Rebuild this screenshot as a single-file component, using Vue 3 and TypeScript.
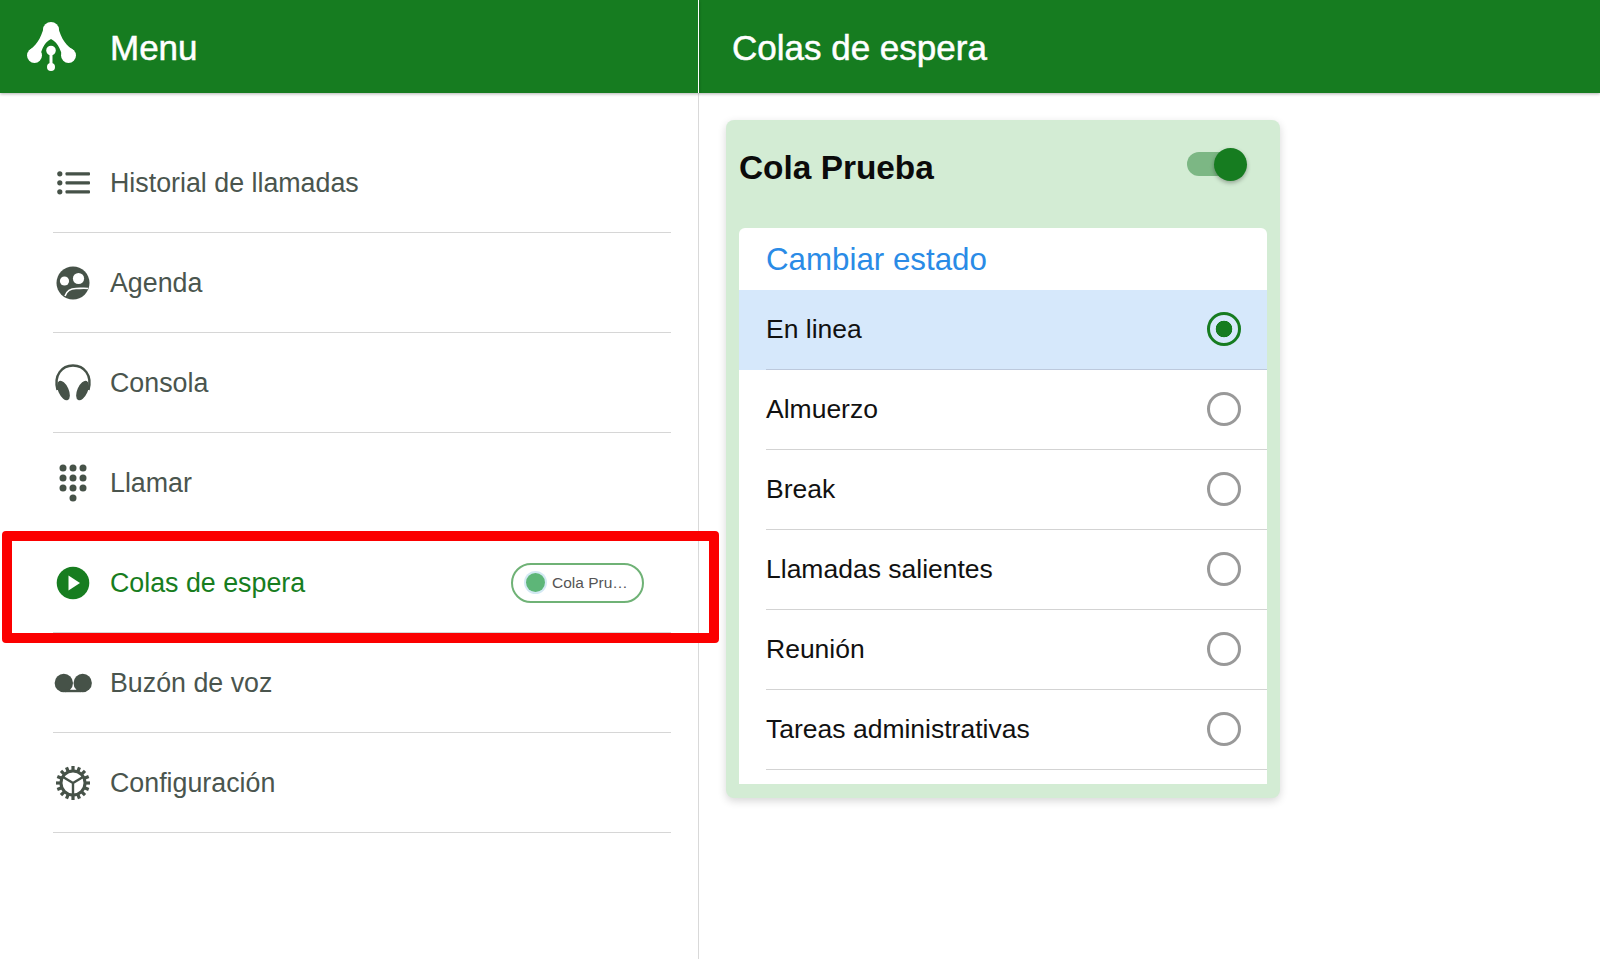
<script setup lang="ts">
interface NavItem {
  id: string
  label: string
  active?: boolean
}

const navItems: NavItem[] = [
  { id: 'list', label: 'Historial de llamadas' },
  { id: 'agenda', label: 'Agenda' },
  { id: 'console', label: 'Consola' },
  { id: 'dial', label: 'Llamar' },
  { id: 'queue', label: 'Colas de espera', active: true },
  { id: 'voicemail', label: 'Buzón de voz' },
  { id: 'settings', label: 'Configuración' },
]

const statuses: string[] = [
  'En linea',
  'Almuerzo',
  'Break',
  'Llamadas salientes',
  'Reunión',
  'Tareas administrativas',
]

const gearTeeth: number[] = Array.from({ length: 16 }, (_, i) => i * 22.5)
const dialDots: number[][] = [
  [10, 5], [20, 5], [30, 5],
  [10, 15], [20, 15], [30, 15],
  [10, 25], [20, 25], [30, 25],
  [20, 35],
]
</script>

<template>
  <div class="page">
    <aside class="sidebar">
      <header class="bar bar-left">
        <svg class="logo" viewBox="0 0 60 60" aria-hidden="true">
          <path d="M23 10 C20 24 14 30 8 34.5 L18 44 C20 36 22 27 30 23 C38 27 40 36 43 44 L53 34.5 C46 30 40 24 37 10 Z" fill="#fff" />
          <circle cx="30" cy="14" r="8" fill="#fff" />
          <circle cx="13.5" cy="39.5" r="7.5" fill="#fff" />
          <circle cx="47.5" cy="39.5" r="7.5" fill="#fff" />
          <path d="M30 34 V51" stroke="#fff" stroke-width="3" />
          <circle cx="30" cy="34.5" r="4.8" fill="#fff" />
          <circle cx="30" cy="51" r="4" fill="#fff" />
        </svg>
        <h1 class="bar-title">Menu</h1>
      </header>

      <nav class="nav">
        <div
          v-for="item in navItems"
          :key="item.id"
          class="nav-row"
          :class="{ active: item.active }"
        >
          <span class="nav-icon">
            <svg v-if="item.id === 'list'" viewBox="0 0 40 40" aria-hidden="true">
              <g fill="#465248">
                <circle cx="6.8" cy="10.8" r="2.6" />
                <circle cx="6.8" cy="19.8" r="2.6" />
                <circle cx="6.8" cy="28.8" r="2.6" />
                <rect x="12.5" y="9.2" width="24.5" height="3.3" rx="1" />
                <rect x="12.5" y="18.2" width="24.5" height="3.3" rx="1" />
                <rect x="12.5" y="27.2" width="24.5" height="3.3" rx="1" />
              </g>
            </svg>
            <svg v-else-if="item.id === 'agenda'" viewBox="0 0 40 40" aria-hidden="true">
              <circle cx="20" cy="20" r="16.5" fill="#465248" />
              <circle cx="11.5" cy="18" r="4.6" fill="#fff" />
              <circle cx="25.5" cy="15.5" r="5.6" fill="#fff" />
              <path d="M12 33 C14 27 19 25.5 23 25.5 C27 25.5 31 25 35 25.5" fill="none" stroke="#fff" stroke-width="1.6" />
            </svg>
            <svg v-else-if="item.id === 'console'" viewBox="0 0 40 40" aria-hidden="true">
              <path d="M4.5 27 C0.5 12 9 2.5 20 2.5 C31 2.5 39.5 12 35.5 27" fill="none" stroke="#465248" stroke-width="2.4" />
              <ellipse cx="10.5" cy="27.5" rx="5.2" ry="10.5" transform="rotate(-24 10.5 27.5)" fill="#465248" />
              <ellipse cx="29.5" cy="27.5" rx="5.2" ry="10.5" transform="rotate(24 29.5 27.5)" fill="#465248" />
            </svg>
            <svg v-else-if="item.id === 'dial'" viewBox="0 0 40 40" aria-hidden="true">
              <circle
                v-for="(dot, i) in dialDots"
                :key="i"
                :cx="dot[0]"
                :cy="dot[1]"
                r="3.5"
                fill="#465248"
              />
            </svg>
            <svg v-else-if="item.id === 'queue'" viewBox="0 0 40 40" aria-hidden="true">
              <circle cx="20" cy="20" r="16.3" fill="#177d20" />
              <path d="M15.5 12.5 L27 20 L15.5 27.5 Z" fill="#fff" />
            </svg>
            <svg v-else-if="item.id === 'voicemail'" viewBox="0 0 40 40" aria-hidden="true">
              <circle cx="10.8" cy="20" r="9.2" fill="#465248" />
              <circle cx="29.7" cy="20" r="9.2" fill="#465248" />
              <rect x="12" y="26.8" width="16" height="2.4" fill="#465248" />
            </svg>
            <svg v-else viewBox="0 0 40 40" aria-hidden="true">
              <g fill="#465248">
                <rect
                  v-for="angle in gearTeeth"
                  :key="angle"
                  x="18.4"
                  y="3"
                  width="3.2"
                  height="6"
                  :transform="`rotate(${angle} 20 20)`"
                />
              </g>
              <circle cx="20" cy="20" r="12" fill="none" stroke="#465248" stroke-width="3" />
              <path d="M20 20 L10 14 M20 20 L30 14 M20 20 V32" stroke="#465248" stroke-width="2.4" fill="none" />
            </svg>
          </span>
          <span class="nav-label">{{ item.label }}</span>
          <span v-if="item.active" class="chip">
            <span class="chip-dot"></span>
            <span class="chip-text">Cola Pru…</span>
          </span>
        </div>
      </nav>

      <div class="highlight"></div>
    </aside>

    <main class="main">
      <header class="bar bar-right">
        <h2 class="bar-title">Colas de espera</h2>
      </header>
      <div class="content">
        <section class="card">
          <div class="card-head">
            <h3 class="card-title">Cola Prueba</h3>
            <span class="toggle"><span class="toggle-thumb"></span></span>
          </div>
          <div class="panel">
            <div class="panel-title">Cambiar estado</div>
            <div
              v-for="(status, index) in statuses"
              :key="status"
              class="status-row"
              :class="{ selected: index === 0 }"
            >
              <div class="status-inner">
                <span class="status-label">{{ status }}</span>
                <span class="radio"></span>
              </div>
            </div>
          </div>
        </section>
      </div>
    </main>
  </div>
</template>

<style>
html,
body {
  margin: 0;
  background: #fff;
}
</style>

<style scoped>
.page {
  display: flex;
  height: 959px;
  overflow: hidden;
  background: #fff;
  font-family: "Liberation Sans", Arial, sans-serif;
}
.sidebar {
  position: relative;
  box-sizing: border-box;
  width: 699px;
  flex: none;
  border-right: 1px solid #d9d9d9;
}
.main {
  flex: 1;
  min-width: 0;
}
.bar {
  display: flex;
  align-items: center;
  height: 93px;
  background: #167c20;
  box-shadow: 0 1px 3px rgba(0, 0, 0, 0.3);
  color: #fff;
}
.bar-left {
  margin-right: -1px;
  border-right: 1px solid #fff;
  padding-left: 21px;
}
.bar-right {
  padding-left: 33px;
}
.logo {
  width: 60px;
  height: 60px;
  margin-right: 29px;
  margin-top: -1px;
}
.bar-title {
  margin: 0;
  padding-top: 2px;
  font-size: 35px;
  font-weight: 400;
  -webkit-text-stroke: 0.5px #fff;
}
.nav {
  padding: 40px 27px 0 53px;
}
.nav-row {
  display: flex;
  align-items: center;
  box-sizing: border-box;
  height: 100px;
  border-bottom: 1px solid #d6d6d6;
  color: #4a554e;
  font-size: 26.8px;
}
.nav-row.active {
  color: #177d20;
}
.nav-icon {
  display: block;
  width: 40px;
  height: 40px;
  margin-right: 17px;
}
.nav-icon svg {
  display: block;
  width: 40px;
  height: 40px;
}
.nav-label {
  flex: 1;
  padding-top: 2px;
}
.chip {
  display: flex;
  align-items: center;
  box-sizing: border-box;
  width: 133px;
  height: 40px;
  margin-right: 27px;
  padding-left: 13px;
  border: 2px solid #6fb276;
  border-radius: 20px;
  color: #555;
  font-size: 15.5px;
}
.chip-dot {
  width: 19px;
  height: 19px;
  margin-right: 7px;
  border-radius: 50%;
  background: #5db678;
  box-shadow: 0 0 0 2px #d3e9f3;
}
.highlight {
  position: absolute;
  left: 2px;
  top: 531px;
  width: 717px;
  height: 112px;
  box-sizing: border-box;
  border: 10px solid #fb0000;
  border-radius: 4px;
  z-index: 2;
}
.content {
  padding: 27px;
}
.card {
  box-sizing: border-box;
  width: 554px;
  height: 678px;
  padding: 0 13px;
  border-radius: 8px;
  background: #d3ecd4;
  box-shadow: 0 3px 8px rgba(0, 0, 0, 0.16);
}
.card-head {
  display: flex;
  align-items: center;
  justify-content: space-between;
  height: 108px;
  padding-right: 27px;
  padding-bottom: 12px;
  box-sizing: border-box;
}
.card-title {
  margin: 0;
  color: #0b0b0b;
  font-size: 33.4px;
  font-weight: 700;
}
.toggle {
  position: relative;
  display: block;
  width: 53px;
  height: 24px;
  margin-top: -8px;
  border-radius: 12px;
  background: #7cb784;
}
.toggle-thumb {
  position: absolute;
  right: -7px;
  top: -4.5px;
  width: 33px;
  height: 33px;
  border-radius: 50%;
  background: #167c20;
  box-shadow: 0 2px 4px rgba(0, 0, 0, 0.3);
}
.panel {
  height: 556px;
  overflow: hidden;
  border-radius: 6px 6px 0 0;
  background: #fff;
}
.panel-title {
  display: flex;
  align-items: center;
  height: 62px;
  padding-left: 27px;
  padding-top: 2px;
  box-sizing: border-box;
  color: #2a8be6;
  font-size: 31.3px;
}
.status-row {
  height: 80px;
  padding-left: 27px;
}
.status-row.selected {
  background: #d6e8fb;
}
.status-inner {
  display: flex;
  align-items: center;
  justify-content: space-between;
  box-sizing: border-box;
  height: 80px;
  padding-right: 26px;
  border-bottom: 1px solid #d3d3d3;
}
.selected .status-inner {
  border-bottom-color: #bdc9dc;
}
.status-label {
  color: #111;
  font-size: 26.5px;
}
.radio {
  box-sizing: border-box;
  width: 34px;
  height: 34px;
  margin-top: -1px;
  border: 3px solid #999;
  border-radius: 50%;
}
.selected .radio {
  border-color: #167c20;
  background: radial-gradient(circle, #167c20 0 8px, transparent 8.6px);
}
</style>
